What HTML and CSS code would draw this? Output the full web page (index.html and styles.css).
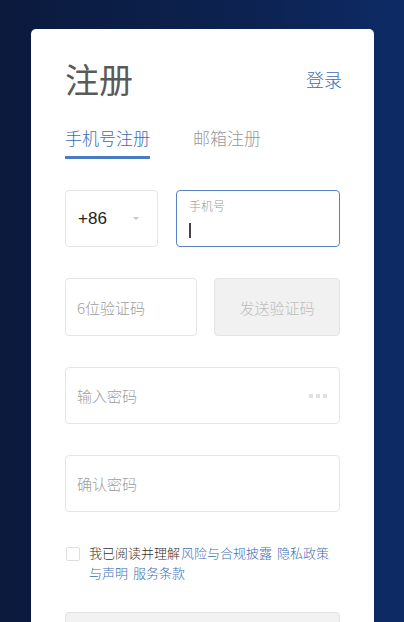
FILE: index.html
```html
<!DOCTYPE html>
<html lang="zh-CN">
<head>
<meta charset="utf-8">
<title>注册</title>
<link rel="stylesheet" href="styles.css">
</head>
<body>
<div class="card">
  <div class="head">
    <h1 class="title">注册</h1>
    <a class="login">登录</a>
  </div>
  <div class="tabs">
    <div class="tab active">手机号注册</div>
    <div class="tab">邮箱注册</div>
  </div>
  <div class="form">
    <div class="row">
      <div class="box select">
        <span class="code">+86</span>
        <span class="caret"></span>
      </div>
      <div class="box phone focus">
        <span class="label">手机号</span>
        <span class="cursor"></span>
      </div>
    </div>
    <div class="row row-code">
      <div class="box codein"><span class="ph">6位验证码</span></div>
      <div class="box send">发送验证码</div>
    </div>
    <div class="box full"><span class="ph">输入密码</span><span class="dots"><i></i><i></i><i></i></span></div>
    <div class="box full"><span class="ph">确认密码</span></div>
  </div>
  <div class="agree">
    <span class="check"></span>
    <div class="agree-text">
      <div class="line">我已阅读并理解<a class="link first">风险与合规披露</a><a class="link">隐私政策</a></div>
      <div class="line"><a class="link cont">与声明</a><a class="link">服务条款</a></div>
    </div>
  </div>
  <div class="submit"></div>
</div>
</body>
</html>
```

FILE: styles.css
```css
html, body {
  margin: 0;
  height: 100%;
}
body {
  background: linear-gradient(90deg, #0b1a3d 0%, #0c2250 60%, #0e2b66 100%);
  font-family: "Noto Sans CJK SC", "Noto Sans", sans-serif;
  font-weight: 300;
  overflow: hidden;
}
.card {
  margin: 29px 0 0 31px;
  width: 343px;
  height: 593px;
  overflow: hidden;
  box-sizing: border-box;
  background: #fff;
  border-radius: 5px 5px 0 0;
  padding: 30px 34px 0;
}
.head {
  display: flex;
  justify-content: space-between;
  align-items: center;
  height: 40px;
}
.title {
  margin: 0;
  font-size: 34px;
  line-height: 40px;
  font-weight: 400;
  color: #5a5a5a;
}
.login {
  font-size: 18px;
  line-height: 24px;
  color: #3b6db3;
  margin-right: -2px;
}
.tabs {
  display: flex;
  gap: 43px;
  margin-top: 27px;
}
.tab {
  font-size: 17px;
  line-height: 24px;
  color: #9a9a9a;
  padding-bottom: 6px;
  border-bottom: 3px solid transparent;
}
.tab.active {
  color: #3b6db3;
  border-bottom-color: #4a7cc6;
}
.form {
  margin-top: 31px;
  display: flex;
  flex-direction: column;
  gap: 31px;
}
.row {
  display: flex;
  gap: 18px;
}
.row-code {
  gap: 17px;
}
.box {
  box-sizing: border-box;
  height: 57px;
  border: 1px solid #e6e6e6;
  border-radius: 4px;
  display: flex;
  align-items: center;
  padding: 0 11px;
  font-size: 15px;
  color: #333;
}
.select {
  width: 93px;
  justify-content: space-between;
  padding: 0 18px 0 12px;
}
.code {
  font-size: 17px;
  color: #222;
  font-family: "Liberation Sans", "Noto Sans CJK SC", sans-serif;
  font-weight: 400;
}
.caret {
  width: 0;
  height: 0;
  border-left: 3px solid transparent;
  border-right: 3px solid transparent;
  border-top: 3px solid #c8c8c8;
}
.phone {
  flex: 1;
  flex-direction: column;
  align-items: flex-start;
  justify-content: flex-start;
  padding: 7px 12px 0;
}
.focus {
  border-color: #5a82c2;
}
.label {
  font-size: 12px;
  line-height: 16px;
  color: #9a9a9a;
}
.cursor {
  margin-top: 9px;
  width: 1.5px;
  height: 15px;
  background: #444;
}
.row-code .box {
  height: 58px;
}
.codein {
  width: 132px;
}
.send {
  flex: 1;
  justify-content: center;
  background: #f1f1f1;
  border-color: #e4e4e4;
  color: #bdbdbd;
}
.ph {
  color: #9e9e9e;
}
.full {
  justify-content: space-between;
}
.dots {
  display: flex;
  gap: 3px;
  margin-right: 1px;
}
.dots i {
  display: block;
  width: 4px;
  height: 4px;
  background: #e0e0e0;
}
.agree {
  display: flex;
  align-items: flex-start;
  margin-top: 31px;
}
.check {
  flex: none;
  box-sizing: border-box;
  width: 14px;
  height: 14px;
  border: 1px solid #dedede;
  border-radius: 2px;
  margin: 4px 9px 0 1px;
}
.agree-text {
  font-size: 13px;
  line-height: 20px;
  color: #333;
}
.line {
  white-space: nowrap;
}
.link {
  color: #3b6db3;
  margin-left: 5px;
}
.link.first {
  margin-left: 1px;
}
.link.cont {
  margin-left: 0;
}
.submit {
  margin-top: 29px;
  height: 50px;
  box-sizing: border-box;
  border: 1px solid #e2e2e2;
  border-radius: 4px;
  background: #f2f2f2;
}
```
